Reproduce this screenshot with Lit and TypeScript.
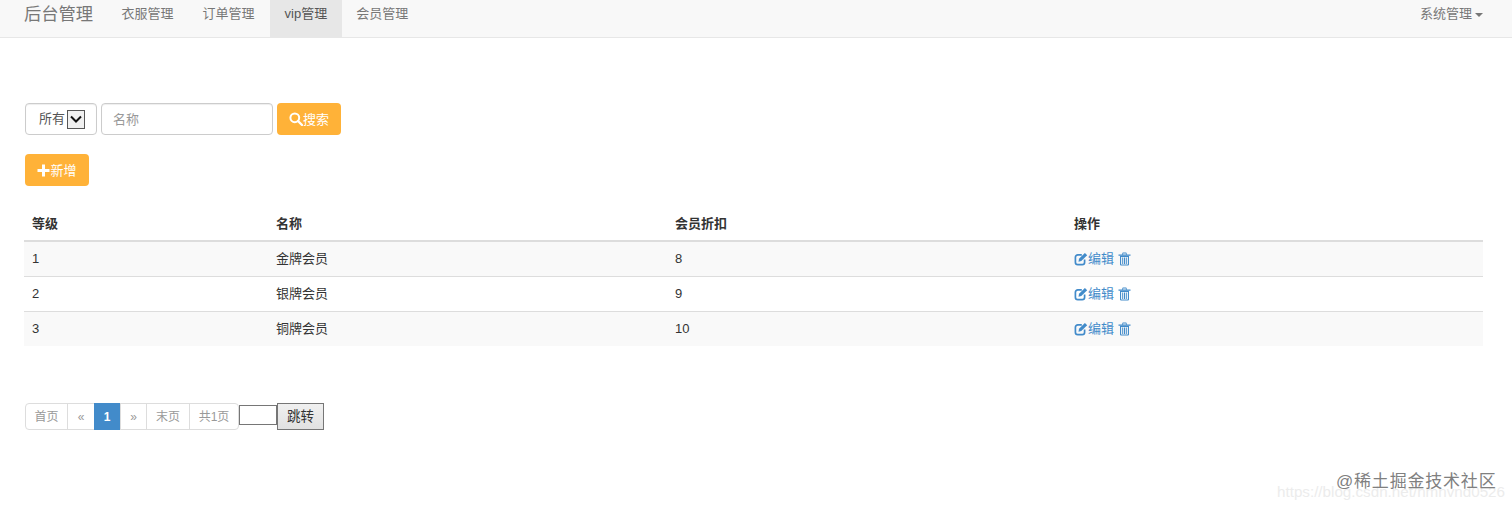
import { LitElement, html, css, svg } from "lit";
import { customElement } from "lit/decorators.js";

const edit = svg`<svg class="ic" viewBox="0 0 14 14" width="14" height="14"><path d="M10.6 7.6v2.6a2.400 2.400 0 0 1-2.400 2.400H3.800a2.400 2.400 0 0 1-2.400-2.400V5.300a2.400 2.400 0 0 1 2.400-2.400h4" fill="none" stroke="currentColor" stroke-width="1.700"/><path d="M5 6.800 10.900.9l2.300 2.300-5.900 5.900-2.800.6z" fill="currentColor"/></svg>`;
const trash = svg`<svg class="ic" viewBox="0 0 13 14" width="13" height="14"><path d="M.5 2.600h12v1.200H.5zM4.300 2.600V1.300q0-.8.8-.8h2.800q.8 0 .8.8v1.300H7.900V1.500H5.100v1.100z" fill="currentColor"/><path d="M2 3.800h9v8.600q0 1.100-1.100 1.100H3.100Q2 13.500 2 12.400zM3.100 5v7.300q0 .2.200.2h6.400q.2 0 .2-.2V5zM4.200 5.500h1v6.500h-1zM6 5.500h1v6.500H6zM7.800 5.500h1v6.500h-1z" fill="currentColor" fill-rule="evenodd"/></svg>`;

@customElement("app-root")
export class AppRoot extends LitElement {
  static styles = css`
    :host { display: block; height: 509px; position: relative; overflow: hidden; background: #fff; color: #333;
      font: 13px/20px "Liberation Sans", "Noto Sans CJK SC", sans-serif; }
    .nav { height: 37px; background: #f8f8f8; border-bottom: 1px solid #e7e7e7; display: flex; color: #777; padding-left: 24px; }
    .brand { font-size: 17.300px; line-height: 28px; width: 83px; }
    .nav a { height: 37px; line-height: 28px; padding: 0 14.500px; }
    .nav a.on { background: #e7e7e7; color: #555; margin-left: 1px; }
    .nav .sys { margin-left: auto; padding: 0; margin-right: 29px; display: flex; gap: 3px; }
    .caret { width: 0; height: 0; border: 4px solid transparent; border-top-color: #777; border-bottom: 0; margin-top: 13px; }
    main { padding: 65px 29px 0 24px; }
    .search { display: flex; gap: 4px; height: 32px; }
    .sel, .inp { border: 1.500px solid #ccc; border-radius: 4px; box-sizing: border-box; height: 32px; display: flex; align-items: center; box-shadow: inset 0 1px 1px rgba(0,0,0,.07); }
    .sel { width: 72px; margin-left: 1px; padding: 0 0 0 13px; gap: 2px; color: #555; }
    .arrow { width: 18px; height: 19px; box-sizing: border-box; border: 1px solid #555; background: #f0f0f0; display: flex; align-items: center; justify-content: center; }
    .inp { width: 172px; padding: 2px 0 0 11px; color: #999; }
    .btn { background: #ffb238; color: #fff; border-radius: 4px; height: 32px; display: inline-flex; align-items: center; justify-content: center; box-sizing: border-box; padding-top: 2px; }
    .btn svg { margin-top: -2px; }
    .btn.s { width: 64px; }
    .btn.a { width: 64px; margin: 19px 0 0 1px; }
    table { width: 1459px; margin-top: 20px; border-collapse: collapse; table-layout: fixed; }
    th, td { text-align: left; padding: 0 8px; }
    th { height: 35px; border-bottom: 2px solid #ddd; font-weight: 700; padding-top: 2px; color: #333; box-sizing: border-box; }
    td { height: 35px; border-bottom: 1px solid #ddd; box-sizing: border-box; padding-top: 1px; }
    tr:last-child td { border-bottom: 0; }
    tbody tr:nth-child(odd) { background: #f9f9f9; }
    .ops { color: #428bca; display: flex; align-items: center; }
    .ops .ic:last-child { margin-left: 4px; }
    .ic { flex: none; }
    .pager { display: flex; margin: 57px 0 0 1px; align-items: flex-start; font-size: 12px; color: #999; }
    .pg { display: flex; height: 27px; border: 1px solid #ddd; border-radius: 4px; box-sizing: border-box; }
    .pg span { display: flex; align-items: center; justify-content: center; border-left: 1px solid #ddd; box-sizing: border-box; }
    .pg span:first-child { border-left: 0; }
    .pg .cur { background: #428bca; color: #fff; font-weight: 700; margin: -1px 0; height: 27px; border: 0; }
    .go { width: 38px; height: 20px; box-sizing: border-box; border: 1px solid #767676; margin-top: 2px; background: #fff; }
    .jump { width: 47px; height: 27px; box-sizing: border-box; border: 1px solid #767676; background: linear-gradient(#f0f0f0, #e1e1e1); color: #333; font-size: 13.500px; display: flex; align-items: center; justify-content: center; }
    .mark { position: absolute; left: 1336px; top: 472px; font-size: 17px; color: #808080; white-space: nowrap; letter-spacing: .8px; }
    .url { position: absolute; left: 1277px; top: 482px; font-size: 15.200px; color: #ececec; white-space: nowrap; }
  `;
  render() {
    const rows = [["1", "金牌会员", "8"], ["2", "银牌会员", "9"], ["3", "铜牌会员", "10"]];
    const pages: [string, number, string][] = [["首页", 41, ""], ["«", 27, ""], ["1", 26, "cur"], ["»", 26, ""], ["末页", 43, ""], ["共1页", 49, ""]];
    return html`
      <div class="nav">
        <div class="brand">后台管理</div>
        <a>衣服管理</a><a>订单管理</a><a class="on">vip管理</a><a>会员管理</a>
        <a class="sys">系统管理<i class="caret"></i></a>
      </div>
      <main>
        <div class="search">
          <div class="sel">所有<div class="arrow"><svg width="12" height="8" viewBox="0 0 12 8"><path d="M1 1.500 6 6.500l5-5" fill="none" stroke="#111" stroke-width="2"/></svg></div></div>
          <div class="inp">名称</div>
          <div class="btn s"><svg width="14" height="14" viewBox="0 0 14 14"><circle cx="5.800" cy="5.800" r="4.400" fill="none" stroke="#fff" stroke-width="2"/><path d="m9 9 4 4" stroke="#fff" stroke-width="2.400" stroke-linecap="round"/></svg>搜索</div>
        </div>
        <div class="btn a"><svg width="13" height="13" viewBox="0 0 13 13"><path d="M5 .5h3V5h4.500v3H8v4.500H5V8H.5V5H5z" fill="#fff"/></svg>新增</div>
        <table>
          <colgroup><col style="width:244px"><col style="width:399px"><col style="width:399px"><col style="width:417px"></colgroup>
          <thead><tr><th>等级</th><th>名称</th><th>会员折扣</th><th>操作</th></tr></thead>
          <tbody>${rows.map(r => html`<tr><td>${r[0]}</td><td>${r[1]}</td><td>${r[2]}</td><td><div class="ops">${edit}编辑${trash}</div></td></tr>`)}</tbody>
        </table>
        <div class="pager">
          <div class="pg">${pages.map(p => html`<span class=${p[2]} style="width:${p[1]}px">${p[0]}</span>`)}</div>
          <div class="go"></div>
          <div class="jump">跳转</div>
        </div>
      </main>
      <div class="url">https://blog.csdn.net/nmnvnd0526</div>
      <div class="mark">@稀土掘金技术社区</div>
    `;
  }
}
